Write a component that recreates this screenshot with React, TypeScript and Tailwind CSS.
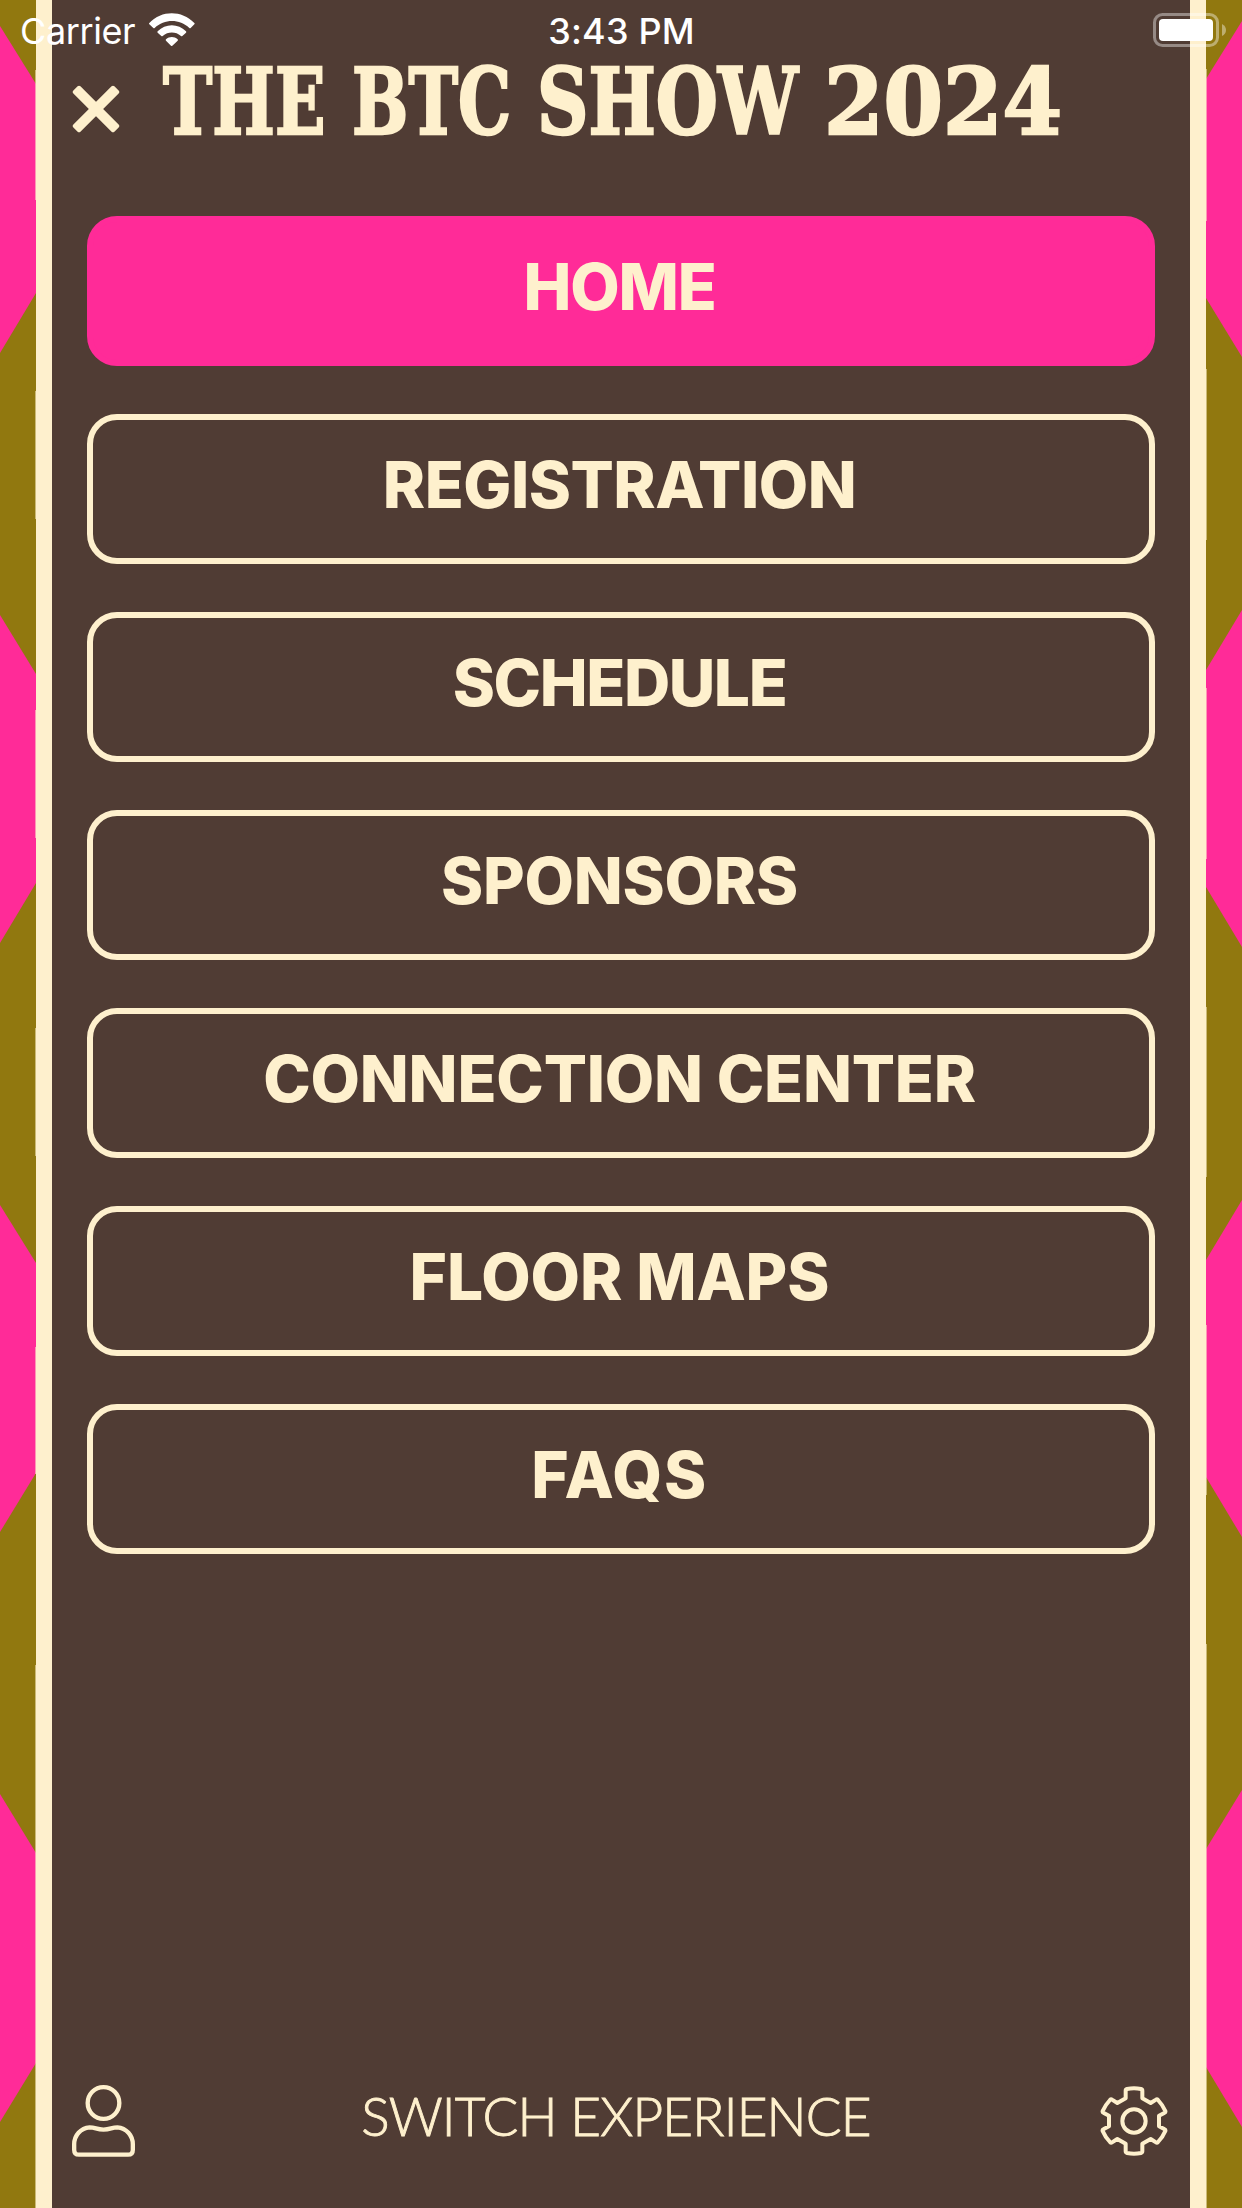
import clsx from "clsx";

type MenuItem = { label: string; tracking: string; active?: boolean };

const menuItems: MenuItem[] = [
	{ label: "Home", tracking: "tracking-[-1.2px]", active: true },
	{ label: "Registration", tracking: "tracking-[-0.5px]" },
	{ label: "Schedule", tracking: "tracking-[-1.4px]" },
	{ label: "Sponsors", tracking: "tracking-[-0.2px]" },
	{ label: "Connection Center", tracking: "tracking-[-0.2px]" },
	{ label: "Floor Maps", tracking: "tracking-[-0.1px]" },
	{ label: "FAQs", tracking: "tracking-[1.6px]" },
];

const titleWords = [
	{ text: "THE", box: "w-[189px]", scale: "scale-x-[0.72]" },
	{ text: "BTC", box: "w-[185px]", scale: "scale-x-[0.725]" },
	{ text: "SHOW", box: "w-[287px]", scale: "scale-x-[0.775]" },
	{ text: "2024", box: "w-[235px]", scale: "scale-x-[0.93]" },
];

// Each diamond lists where it leaves the outer and inner edge of the strip.
const leftDiamonds = [
	[26, 84, 293, 353],
	[615, 674, 883, 943],
	[1205, 1263, 1473, 1532],
	[1794, 1853, 2063, 2122],
];

const rightDiamonds = [
	[21, 79, 298, 357],
	[610, 670, 887, 947],
	[1200, 1260, 1477, 1537],
	[1790, 1849, 2067, 2127],
];

const leftTicks = [
	[70, 130],
	[391, 128],
	[710, 128],
	[1028, 128],
	[1347, 127],
	[1665, 543],
];

const rightTicks = [
	[69, 152],
	[369, 171],
	[688, 171],
	[1007, 170],
	[1325, 170],
	[1644, 564],
];

const EdgePattern = ({ diamonds, ticks, flip }: { diamonds: number[][]; ticks: number[][]; flip?: boolean }) => (
	<svg className={clsx("h-full w-9 shrink-0 bg-[#91780f]", flip && "-scale-x-100")} viewBox="0 0 36 2208" aria-hidden="true">
		{diamonds.map(([a, b, c, d]) => (
			<path key={a} d={`M0 ${a}L36 ${b}V${c}L0 ${d}Z`} fill="#ff2b98" />
		))}
		{ticks.map(([y, height]) => (
			<rect key={y} x="35" y={y} width="1" height={height} fill="#fef0cd" opacity="0.55" />
		))}
	</svg>
);

const StatusBar = () => (
	<div className="absolute inset-x-0 top-0 flex h-[60px] items-center font-['Inter',sans-serif] text-[36px] leading-[60px] text-white">
		<div className="flex flex-1 items-center gap-[15px] pl-5">
			<span className="w-[114px] pt-0.5 tracking-[-0.4px]">Carrier</span>
			<svg className="h-[34px] w-[46px]" viewBox="0 0 138 102" fill="#fff">
				<path d="M1 34Q-1 32 1 30C38-9 98-9 136 30Q138 32 136 34L125 45Q123 47 121 45C92 17 46 17 17 45Q15 47 13 45Z" />
				<path d="M26 59Q24 57 26 55C49 31 88 31 111 55Q113 57 111 59L100 69Q98 71 96 69C80 55 57 55 41 69Q39 71 37 69Z" />
				<path d="M51 83Q49 81 51 79C61 70 76 70 86 79Q88 81 86 83L70 98Q68 100 66 98Z" />
			</svg>
		</div>
		<span className="pt-0.5 pr-[3px] font-medium tracking-[0.2px]">3:43 PM</span>
		<div className="flex flex-1 justify-end pr-4">
			<svg className="h-[34px] w-[73px]" viewBox="0 0 73 34">
				<rect x="1.5" y="1.5" width="63" height="31" rx="8" fill="none" stroke="#fff" strokeWidth="3" opacity="0.4" />
				<rect x="6" y="6" width="54" height="22" rx="4" fill="#fff" />
				<path d="M69 11Q73 13 73 17T69 23Z" fill="#fff" opacity="0.4" />
			</svg>
		</div>
	</div>
);

const CloseIcon = () => (
	<svg className="size-12" viewBox="-24 -24 48 48" fill="#fef0cd">
		<rect x="-29" y="-5" width="58" height="10" rx="2" transform="rotate(45)" />
		<rect x="-29" y="-5" width="58" height="10" rx="2" transform="rotate(-45)" />
	</svg>
);

const UserIcon = () => (
	<svg className="h-[72px] w-[63px]" viewBox="0 0 189 216" fill="none" stroke="#fef0cd" strokeWidth="13">
		<circle cx="94.500" cy="54" r="47.500" />
		<path d="M53 127C70 127 74 134 94.500 134S119 127 136 127C163 129 182.500 151 182.500 178V194Q182.500 209 168 209H21Q6.500 209 6.500 194V178C6.500 151 26 129 53 127Z" />
	</svg>
);

const GearIcon = () => (
	<svg className="h-[70px] w-[68px]" viewBox="-102 -105 204 210" fill="none" stroke="#fef0cd" strokeWidth="12" strokeLinejoin="round">
		<circle r="35" />
		<path d="M-25-68V-91Q-25-95-21-96Q0-100 21-96Q25-95 25-91V-68L50-54L66-64Q69-66 72-63Q87-47 94-30Q95-26 92-25L75-16V16L92 25Q95 26 94 30Q87 47 72 63Q69 66 66 64L50 54L25 68V91Q25 95 21 96Q0 100-21 96Q-25 95-25 91V68L-50 54L-66 64Q-69 66-72 63Q-87 47-94 30Q-95 26-92 25L-75 16V-16L-92-25Q-95-26-94-30Q-87-47-72-63Q-69-66-66-64L-50-54Z" />
	</svg>
);

const MenuButton = ({ item }: { item: MenuItem }) => (
	<button
		type="button"
		className={clsx(
			"flex h-[150px] items-center justify-center rounded-[30px] border-[6px] pr-[3px] pb-[9px] font-['Inter',sans-serif] text-[64px] leading-none font-extrabold whitespace-nowrap uppercase",
			item.tracking,
			item.active ? "border-[#ff2b98] bg-[#ff2b98]" : "border-[#fef0cd]",
		)}
	>
		{item.label}
	</button>
);

export default function App() {
	return (
		<div className="relative flex h-[2208px] w-[1242px] overflow-hidden bg-[#503c34] text-[#fef0cd]">
			<EdgePattern diamonds={leftDiamonds} ticks={leftTicks} />
			<div className="w-4 shrink-0 bg-[#fef0cd]" />
			<main className="flex min-w-0 flex-1 flex-col">
				<header className="flex h-[216px] items-start pt-[60px] pl-5">
					<button type="button" aria-label="Close" className="mt-[25px]">
						<CloseIcon />
					</button>
					<h1 className="mt-0.5 ml-[43px] flex font-['DejaVu_Serif',serif] text-[92px] leading-[80px] font-bold [-webkit-text-stroke:2.5px_#fef0cd]">
						{titleWords.map((word) => (
							<span key={word.text} className={word.box}>
								<span className={clsx("inline-block origin-left", word.scale)}>{word.text}</span>
							</span>
						))}
					</h1>
				</header>
				<nav className="flex flex-col gap-12 px-[35px]">
					{menuItems.map((item) => (
						<MenuButton key={item.label} item={item} />
					))}
				</nav>
				<footer className="mt-auto flex h-[123px] items-start justify-between pr-[22px] pl-5">
					<button type="button" aria-label="Profile">
						<UserIcon />
					</button>
					<button
						type="button"
						className="pr-[3px] font-['Lato',sans-serif] text-[53px] leading-[62px] font-light tracking-[-0.8px] uppercase [-webkit-text-stroke:0.9px_#fef0cd]"
					>
						Switch Experience
					</button>
					<button type="button" aria-label="Settings" className="mt-px">
						<GearIcon />
					</button>
				</footer>
			</main>
			<div className="w-4 shrink-0 bg-[#fef0cd]" />
			<EdgePattern diamonds={rightDiamonds} ticks={rightTicks} flip />
			<StatusBar />
		</div>
	);
}
